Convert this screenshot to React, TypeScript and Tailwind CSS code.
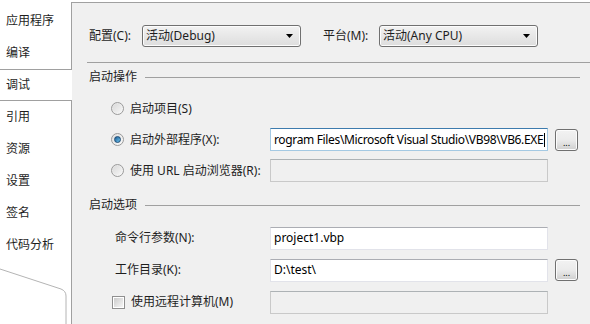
import React from "react";

const tabs = ["应用程序", "编译", "调试", "引用", "资源", "设置", "签名", "代码分析"];

const Dropdown = ({ value, width }: { value: string; width: string }) => (
  <div
    className={`flex h-[22px] ${width} items-center justify-between rounded-[3px] border border-[#707070] bg-gradient-to-b from-[#f2f2f2] to-[#dddddd] pl-[3px] pr-[7px] shadow-[inset_0_0_0_1px_#fcfcfc]`}
  >
    <span className="text-[12px] text-[#1e1e1e]">{value}</span>
    <svg width="7" height="4" viewBox="0 0 7 4">
      <path d="M0 0h7L3.5 4z" fill="#000" />
    </svg>
  </div>
);

const Radio = ({ checked }: { checked?: boolean }) => (
  <div className="flex h-[13px] w-[13px] items-center justify-center rounded-full border border-[#9a9a9a] bg-gradient-to-br from-[#e0e0e0] to-[#fafafa]">
    {checked ? (
      <div className="h-[7px] w-[7px] rounded-full border border-[#1c4a73] bg-gradient-to-br from-[#1c5f96] to-[#6fc4ee]" />
    ) : (
      <div className="h-[9px] w-[9px] rounded-full bg-gradient-to-br from-[#dadada] to-[#f6f6f6]" />
    )}
  </div>
);

const TextBox = ({
  value,
  disabled,
  focused,
}: {
  value?: string;
  disabled?: boolean;
  focused?: boolean;
}) => (
  <div
    className={`flex h-[23px] w-[278px] items-center overflow-hidden border pl-[3px] ${
      focused
        ? "border-[#a4c9e3] border-t-[#3d7bad] bg-white"
        : disabled
        ? "border-[#c9c9c9] border-t-[#adb2b5] bg-[#f0f0f0]"
        : "border-[#e2e3ea] border-t-[#abadb3] bg-white"
    }`}
  >
    {value && (
      <span
        className={`whitespace-nowrap text-[12px] text-black ${
          focused ? "tracking-[-0.35px]" : ""
        }`}
      >
        {value}
      </span>
    )}
    {focused && <span className="ml-[1px] h-[14px] w-px bg-black" />}
  </div>
);

const BrowseButton = () => (
  <div className="ml-[7px] flex h-[22px] w-[23px] items-end justify-center rounded-[3px] border border-[#707070] bg-gradient-to-b from-[#f2f2f2] via-[#ebebeb] to-[#cfcfcf] pb-[3px] shadow-[inset_0_0_0_1px_#fcfcfc]">
    <span className="text-[9px] leading-[9px] text-black">...</span>
  </div>
);

const GroupHeader = ({ title, mt }: { title: string; mt: string }) => (
  <div className={`${mt} flex h-[16px] items-center pl-[17px] pr-[10px]`}>
    <span className="text-[12px] text-[#1e1e1e]">{title}</span>
    <div className="ml-[8px] h-px flex-1 bg-[#a0a0a0]" />
  </div>
);

const App = () => {
  return (
    <div
      className="relative flex h-[324px] w-[590px] overflow-hidden bg-white text-[#1e1e1e]"
      style={{ fontFamily: '"Noto Sans", "Noto Sans CJK SC", sans-serif' }}
    >
      {/* SIDEBAR */}
      <div className="relative w-[71px] shrink-0">
        <div className="flex flex-col pt-[5px]">
          {tabs.map((t) => (
            <div
              key={t}
              className={`flex h-[32px] items-center pl-[6px] text-[12px] ${
                t === "调试"
                  ? "relative z-10 -mr-px border-y border-[#a0a0a0] bg-white"
                  : ""
              }`}
            >
              {t}
            </div>
          ))}
        </div>
        <svg
          className="absolute bottom-0 left-0"
          width="71"
          height="56"
          viewBox="0 0 71 56"
        >
          <path
            d="M0 1 L61 21 Q66 23 66 28 L66 56"
            fill="none"
            stroke="#b4b4b4"
            strokeWidth="1"
          />
        </svg>
      </div>

      {/* PANEL */}
      <div className="mt-[2px] flex flex-1 flex-col border-l border-t border-[#a0a0a0] bg-[#f0f0f0]">
        {/* CONFIG ROW */}
        <div className="mt-[22px] flex h-[22px] items-center pl-[17px]">
          <span className="w-[53px] text-[12px]">配置(C):</span>
          <Dropdown value="活动(Debug)" width="w-[159px]" />
          <span className="ml-[22px] w-[56px] text-[12px]">平台(M):</span>
          <Dropdown value="活动(Any CPU)" width="w-[159px]" />
        </div>
        <div className="ml-[15px] mt-[15px] h-px bg-[#a0a0a0]" />

        {/* START ACTION */}
        <GroupHeader title="启动操作" mt="mt-[6px]" />
        <div className="mt-[8px] flex flex-col">
          <div className="flex h-[31px] items-center pl-[39px]">
            <Radio />
            <span className="ml-[6px] text-[12px]">启动项目(S)</span>
          </div>
          <div className="flex h-[31px] items-center pl-[39px]">
            <div className="flex w-[159px] items-center">
              <Radio checked />
              <span className="ml-[6px] text-[12px]">启动外部程序(X):</span>
            </div>
            <TextBox
              value="rogram Files\Microsoft Visual Studio\VB98\VB6.EXE"
              focused
            />
            <BrowseButton />
          </div>
          <div className="flex h-[31px] items-center pl-[39px]">
            <div className="flex w-[159px] items-center">
              <Radio />
              <span className="ml-[6px] text-[12px]">使用 URL 启动浏览器(R):</span>
            </div>
            <TextBox disabled />
          </div>
        </div>

        {/* START OPTIONS */}
        <GroupHeader title="启动选项" mt="mt-[11px]" />
        <div className="mt-[9px] flex flex-col">
          <div className="flex h-[32px] items-center pl-[43px]">
            <span className="w-[155px] text-[12px]">命令行参数(N):</span>
            <TextBox value="project1.vbp" />
          </div>
          <div className="flex h-[32px] items-center pl-[43px]">
            <span className="w-[155px] text-[12px]">工作目录(K):</span>
            <TextBox value="D:\test\" />
            <BrowseButton />
          </div>
          <div className="flex h-[32px] items-center pl-[40px]">
            <div className="flex w-[158px] items-center">
              <div className="flex h-[13px] w-[13px] items-center justify-center border border-[#8f8f8f] bg-white">
                <div className="h-[9px] w-[9px] bg-gradient-to-br from-[#cbcbcb] to-[#f6f6f6]" />
              </div>
              <span className="ml-[6px] text-[12px]">使用远程计算机(M)</span>
            </div>
            <TextBox disabled />
          </div>
        </div>
      </div>
    </div>
  );
};

export default App;
